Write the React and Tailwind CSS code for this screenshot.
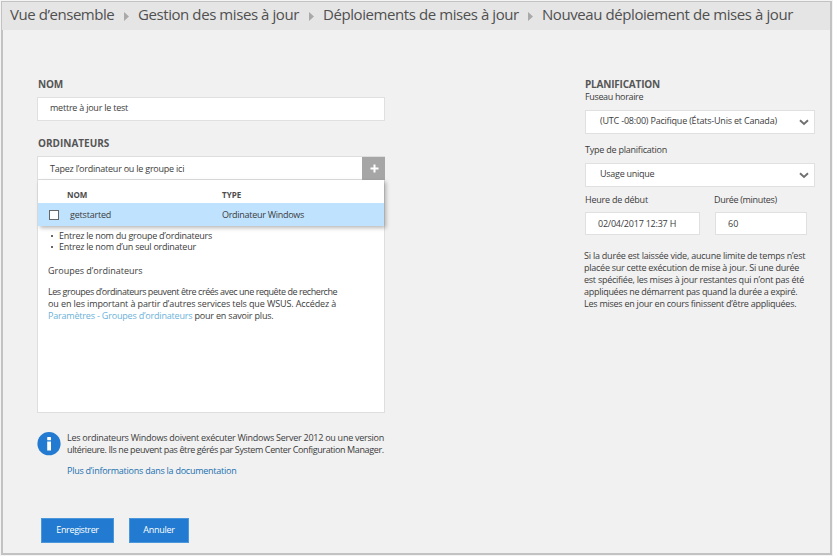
import React from "react";

const crumbs = [
  { label: "Vue d’ensemble", cls: "w-[104px] tracking-[-0.45px]" },
  { label: "Gestion des mises à jour", cls: "w-[161px] tracking-[-0.42px]" },
  { label: "Déploiements de mises à jour", cls: "w-[195px] tracking-[-0.42px]" },
  { label: "Nouveau déploiement de mises à jour", cls: "tracking-[-0.42px]" },
];

function Heading({ children, className = "" }) {
  return <h2 className={`text-[10px] leading-[12px] font-bold whitespace-nowrap text-[#555555] ${className}`}>{children}</h2>;
}

function Field({ children, className = "" }) {
  return <div className={`flex items-center border border-[#e0e0e0] bg-white whitespace-nowrap ${className}`}>{children}</div>;
}

function Chevron() {
  return (
    <svg className="mt-[2px] mr-[5px] ml-auto h-[7px] w-[10px] shrink-0" viewBox="0 0 10 7" fill="none">
      <path d="M1 1.2 L5 5 L9 1.2" stroke="#707070" strokeWidth="1.9" />
    </svg>
  );
}

function PlusIcon() {
  return (
    <svg className="h-[9px] w-[9px]" viewBox="0 0 9 9">
      <path d="M4.5 0.5V8.5M0.5 4.5H8.5" stroke="#ffffff" strokeWidth="2" />
    </svg>
  );
}

function InfoIcon() {
  return (
    <svg className="h-[24px] w-[24px] shrink-0" viewBox="0 0 24 24">
      <circle cx="12" cy="11.7" r="11.6" fill="#227bd0" />
      <rect x="10.2" y="5" width="3.8" height="3.3" rx="0.6" fill="#fff" />
      <path d="M10.2 9.5H14V18.5H10.2Z" fill="#fff" />
    </svg>
  );
}

export default function App() {
  return (
    <div className="h-[556px] w-[833px] overflow-hidden bg-[#f4f4f4] pt-px pl-px font-['Open_Sans','Noto_Sans',sans-serif] text-[9px] leading-[12px] text-[#3c3c3c]">
      <div className="flex h-[554px] w-[831px] flex-col border-t border-r-2 border-b-2 border-l-2 border-[#c2c2c2] bg-[#f1f1f1]">
        <nav className="-ml-px flex h-[28px] shrink-0 items-center bg-[#e5e5e5] pb-[4px] pl-[8px] text-[15px] leading-[20px] whitespace-nowrap text-[#505050]">
          {crumbs.map((c, i) => (
            <React.Fragment key={c.label}>
              {i > 0 && (
                <svg className="mt-[4px] mr-[9px] ml-[10px] h-[9px] w-[5px] shrink-0" viewBox="0 0 5 9">
                  <path d="M0 0L5 4.5L0 9Z" fill="#a9a9a9" />
                </svg>
              )}
              <span className={c.cls}>{c.label}</span>
            </React.Fragment>
          ))}
        </nav>

        <main className="flex items-start pt-[48px] pl-[34px]">
          <section className="w-[348px] shrink-0">
            <Heading className="pl-px tracking-[-0.2px]">NOM</Heading>
            <Field className="mt-[7px] h-[24px] pb-[2px] pl-[12px]">
              <span className="tracking-[-0.23px]">mettre à jour le test</span>
            </Field>

            <Heading className="mt-[16px] pl-px">ORDINATEURS</Heading>
            <div className="mt-[7px] h-[257px] border border-[#dedede] bg-white">
              <div className="-mr-px flex h-[23px] items-center border-b border-[#dedede]">
                <span className="pt-px pl-[12px] tracking-[-0.23px] whitespace-nowrap">Tapez l’ordinateur ou le groupe ici</span>
                <button className="ml-auto flex h-[23px] w-[23px] items-center justify-center bg-[#a6a6a6] pl-px">
                  <PlusIcon />
                </button>
              </div>
              <div className="relative bg-white shadow-[2px_2px_4px_rgba(0,0,0,0.28)]">
                <div className="flex h-[23px] items-center pt-[7px] pl-[29px] text-[8px] font-bold text-[#4c4c4c]">
                  <span className="w-[155px]">NOM</span>
                  <span>TYPE</span>
                </div>
                <div className="flex h-[23px] items-center bg-[#bfe3ff] pl-[11px] whitespace-nowrap">
                  <span className="h-[10px] w-[10px] shrink-0 border border-[#666666] bg-white" />
                  <span className="w-[163px] pl-[11px] tracking-[-0.2px]">getstarted</span>
                  <span className="tracking-[-0.28px]">Ordinateur Windows</span>
                </div>
              </div>
              <ul className="mt-[4px] pl-[13px] leading-[11px] whitespace-nowrap">
                <li className="flex items-center gap-[6px]">
                  <span className="h-[2px] w-[2px] bg-[#666666]" />
                  <span className="tracking-[-0.25px]">Entrez le nom du groupe d’ordinateurs</span>
                </li>
                <li className="flex items-center gap-[6px]">
                  <span className="h-[2px] w-[2px] bg-[#666666]" />
                  <span className="tracking-[-0.24px]">Entrez le nom d’un seul ordinateur</span>
                </li>
              </ul>
              <h3 className="mt-[13px] pl-[10px]">Groupes d’ordinateurs</h3>
              <p className="mt-[9px] pl-[10px] whitespace-nowrap">
                <span className="block tracking-[-0.45px]">Les groupes d’ordinateurs peuvent être créés avec une requête de recherche</span>
                <span className="block tracking-[-0.11px]">ou en les important à partir d’autres services tels que WSUS. Accédez à</span>
                <span className="block tracking-[-0.19px]"><a className="text-[#6bb2d9]">Paramètres - Groupes d’ordinateurs</a> pour en savoir plus.</span>
              </p>
            </div>

            <div className="mt-[19px] flex items-start gap-[6px]">
              <InfoIcon />
              <div className="whitespace-nowrap">
                <p>
                  <span className="block tracking-[-0.26px]">Les ordinateurs Windows doivent exécuter Windows Server 2012 ou une version</span>
                  <span className="block tracking-[-0.38px]">ultérieure. Ils ne peuvent pas être gérés par System Center Configuration Manager.</span>
                </p>
                <a className="mt-[9px] block tracking-[-0.25px] text-[#1a70b0]">Plus d’informations dans la documentation</a>
              </div>
            </div>

            <div className="mt-[41px] flex gap-[15px] pl-[4px] text-white">
              <button className="h-[25px] w-[73px] border border-[#4b97dc] bg-[#227bd0] pb-px tracking-[-0.36px]">Enregistrer</button>
              <button className="h-[25px] w-[60px] border border-[#4b97dc] bg-[#227bd0] pb-px tracking-[-0.25px]">Annuler</button>
            </div>
          </section>

          <section className="ml-[199px] w-[231px] shrink-0">
            <Heading className="pl-px tracking-[-0.2px]">PLANIFICATION</Heading>
            <p className="mt-px pl-px tracking-[-0.35px]">Fuseau horaire</p>
            <Field className="mt-[7px] ml-px h-[24px] pb-[2px] pl-[14px]">
              <span className="tracking-[-0.2px]">(UTC -08:00) Pacifique (États-Unis et Canada)</span>
              <Chevron />
            </Field>
            <p className="mt-[10px] pl-px tracking-[-0.23px]">Type de planification</p>
            <Field className="mt-[7px] ml-px h-[24px] pb-[2px] pl-[14px]">
              <span className="tracking-[-0.27px]">Usage unique</span>
              <Chevron />
            </Field>
            <div className="mt-[7px] flex pl-px whitespace-nowrap">
              <div className="w-[130px]">
                <p className="tracking-[-0.22px]">Heure de début</p>
                <Field className="mt-[6px] h-[23px] w-[115px] pl-[12px]"><span className="tracking-[-0.22px]">02/04/2017 12:37 H</span></Field>
              </div>
              <div>
                <p className="-ml-px tracking-[-0.32px]">Durée (minutes)</p>
                <Field className="mt-[6px] h-[23px] w-[92px] pl-[12px]"><span>60</span></Field>
              </div>
            </div>
            <p className="mt-[15px] whitespace-nowrap">
              <span className="block tracking-[-0.22px]">Si la durée est laissée vide, aucune limite de temps n’est</span>
              <span className="block tracking-[-0.25px]">placée sur cette exécution de mise à jour. Si une durée</span>
              <span className="block tracking-[-0.25px]">est spécifiée, les mises à jour restantes qui n’ont pas été</span>
              <span className="block tracking-[-0.28px]">appliquées ne démarrent pas quand la durée a expiré.</span>
              <span className="block tracking-[-0.25px]">Les mises en jour en cours finissent d’être appliquées.</span>
            </p>
          </section>
        </main>
      </div>
    </div>
  );
}
